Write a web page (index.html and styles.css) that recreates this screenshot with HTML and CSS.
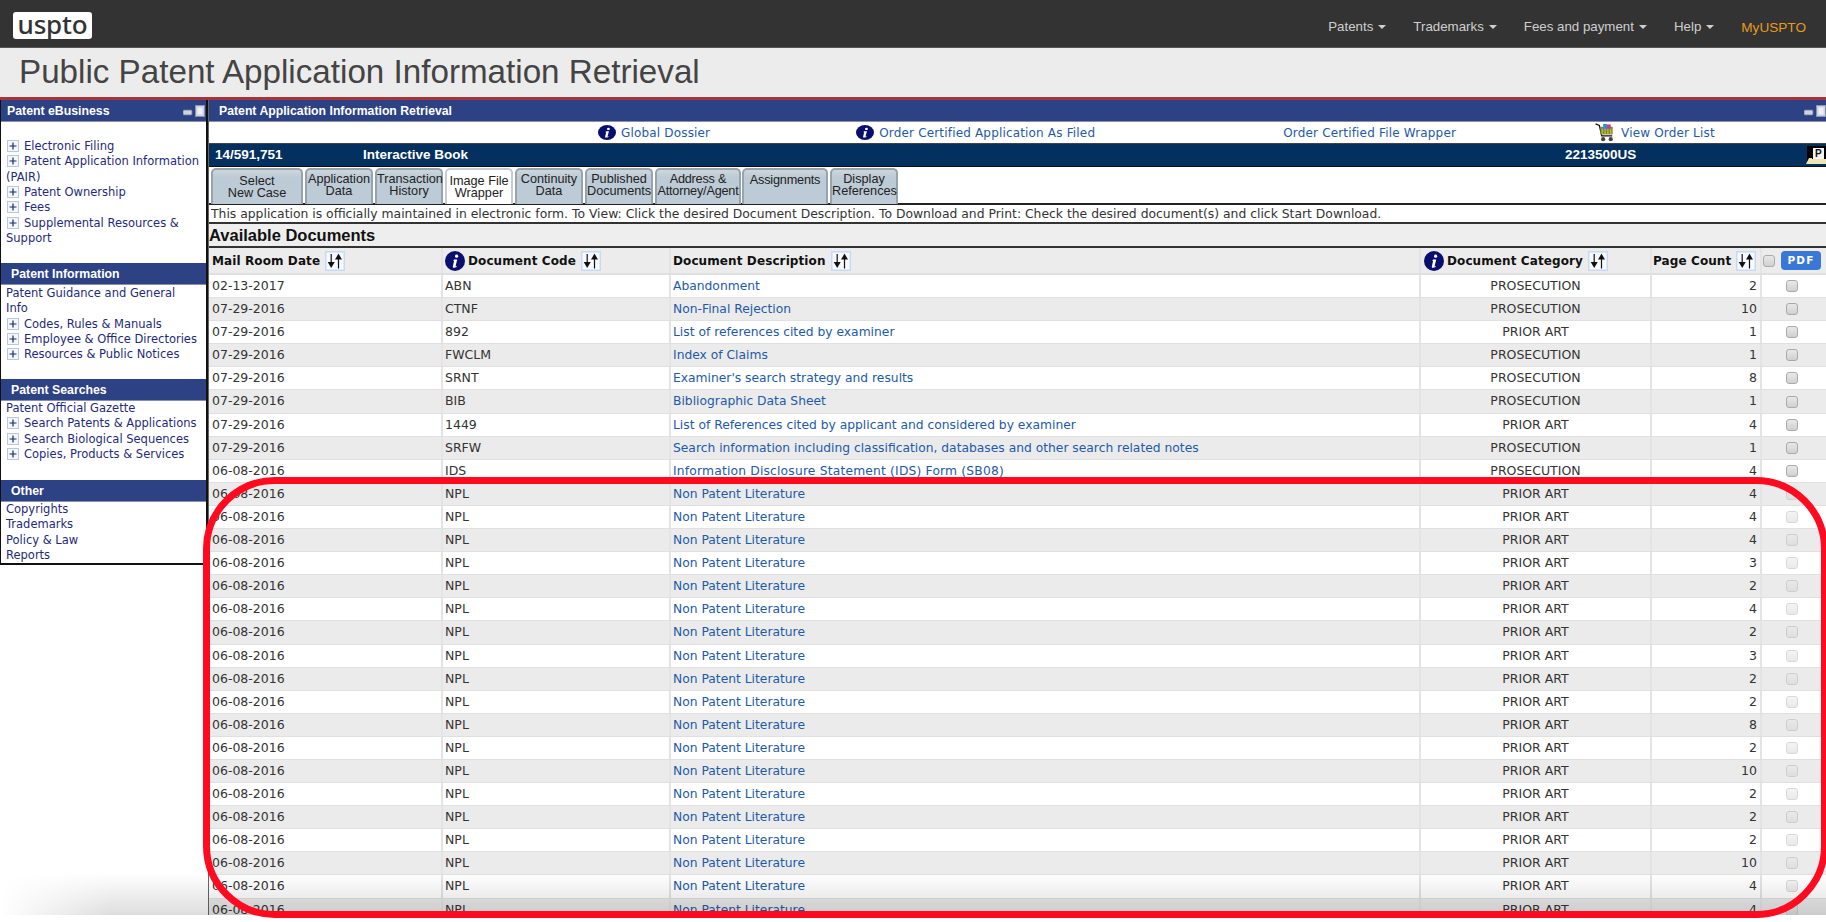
FILE: index.html
```html
<!DOCTYPE html>
<html lang="en">
<head>
<meta charset="utf-8">
<title>Public Patent Application Information Retrieval</title>
<link rel="stylesheet" href="styles.css">
</head>
<body>
<svg class="defs" width="0" height="0" aria-hidden="true">
  <symbol id="info" viewBox="0 0 20 20" preserveAspectRatio="none"><circle cx="10" cy="10" r="10" fill="#0a0f6e"/><circle cx="11.6" cy="5.2" r="1.6" fill="#fff"/><path d="M9 8.4h3.2l-1.7 7 1.3-.5-.2 1.1c-1 .5-1.8.8-2.6.8-1 0-1.3-.6-1.1-1.6l1.2-5.5-1 .1z" fill="#fff"/></symbol>
  <symbol id="sort" viewBox="0 0 20 20"><rect x=".75" y=".75" width="18.5" height="18.5" fill="#f7faff" stroke="#c6daf6" stroke-width="1.5"/><path d="M6.2 3v9.5" stroke="#111" stroke-width="1.2"/><path d="M2.7 11h7l-3.5 6z" fill="#111"/><path d="M13.5 8v9.5" stroke="#111" stroke-width="1.2"/><path d="M10 8.6h7L13.5 2.6z" fill="#111"/></symbol>
  <symbol id="plus" viewBox="0 0 12 12"><rect x=".5" y=".5" width="11" height="11" fill="#f4f7fb" stroke="#b9c8dc"/><path d="M6 2.5v7M2.5 6h7" stroke="#1a2a6c" stroke-width="1.2"/></symbol>
  <symbol id="winbtns" viewBox="0 0 22 12"><rect x="0" y="5" width="9" height="5" rx="1" fill="#cfd3de" stroke="#6c7696" stroke-width=".8"/><rect x="12.5" y=".5" width="9" height="11" fill="#cfd3de" stroke="#8a93ad"/><rect x="14.5" y="2.5" width="5" height="7" fill="#eef0f5"/></symbol>
</svg>
<div class="page">
  <header class="navbar">
    <div class="logo">uspto</div>
    <nav class="menu">
      <a class="menu-item">Patents <i class="caret"></i></a>
      <a class="menu-item">Trademarks <i class="caret"></i></a>
      <a class="menu-item">Fees and payment <i class="caret"></i></a>
      <a class="menu-item">Help <i class="caret"></i></a>
      <a class="menu-item my">MyUSPTO</a>
    </nav>
  </header>
  <div class="titlebar"><h1>Public Patent Application Information Retrieval</h1></div>
  <div class="content">
    <aside class="sidebar">
      <h2 class="side-head first">Patent eBusiness<svg class="winbtns"><use href="#winbtns"/></svg></h2>
      <ul class="side-list s1">
        <li><svg class="plus"><use href="#plus"/></svg>Electronic Filing</li>
        <li><svg class="plus"><use href="#plus"/></svg>Patent Application Information (PAIR)</li>
        <li><svg class="plus"><use href="#plus"/></svg>Patent Ownership</li>
        <li><svg class="plus"><use href="#plus"/></svg>Fees</li>
        <li><svg class="plus"><use href="#plus"/></svg>Supplemental Resources &amp; Support</li>
      </ul>
      <h2 class="side-head">Patent Information</h2>
      <ul class="side-list s2">
        <li>Patent Guidance and General Info</li>
        <li><svg class="plus"><use href="#plus"/></svg>Codes, Rules &amp; Manuals</li>
        <li><svg class="plus"><use href="#plus"/></svg>Employee &amp; Office Directories</li>
        <li><svg class="plus"><use href="#plus"/></svg>Resources &amp; Public Notices</li>
      </ul>
      <h2 class="side-head">Patent Searches</h2>
      <ul class="side-list s3">
        <li>Patent Official Gazette</li>
        <li><svg class="plus"><use href="#plus"/></svg>Search Patents &amp; Applications</li>
        <li><svg class="plus"><use href="#plus"/></svg>Search Biological Sequences</li>
        <li><svg class="plus"><use href="#plus"/></svg>Copies, Products &amp; Services</li>
      </ul>
      <h2 class="side-head">Other</h2>
      <ul class="side-list s4">
        <li>Copyrights</li>
        <li>Trademarks</li>
        <li>Policy &amp; Law</li>
        <li>Reports</li>
      </ul>
    </aside>
    <main class="main">
      <h2 class="main-head">Patent Application Information Retrieval<svg class="winbtns"><use href="#winbtns"/></svg></h2>
      <div class="links">
        <a class="link l1"><svg class="i-small"><use href="#info"/></svg>Global Dossier</a>
        <a class="link l2"><svg class="i-small"><use href="#info"/></svg>Order Certified Application As Filed</a>
        <a class="link l3">Order Certified File Wrapper</a>
        <a class="link l4"><svg class="cart" viewBox="0 0 22 20"><path d="M0 1l4 1.5 2.5 11h11" fill="none" stroke="#111" stroke-width="1.4"/><rect x="5" y="4" width="13" height="8" fill="#7a8a30"/><rect x="8" y="1" width="4" height="6" fill="#2a8fd8"/><rect x="12" y="1.5" width="4" height="5" fill="#c94070"/><path d="M7 6v6M10 6v6M13 6v6M16 6v6" stroke="#d8c840"/><circle cx="8" cy="17" r="2.2" fill="#444"/><circle cx="16" cy="17" r="2.2" fill="#444"/></svg>View Order List</a>
      </div>
      <div class="band">
        <span class="b1">14/591,751</span>
        <span class="b2">Interactive Book</span>
        <span class="b3">2213500US</span>
        <svg class="pfile" viewBox="0 0 20 20"><rect x="1" y="1" width="19" height="15" fill="#000"/><rect x="7" y="3" width="11" height="11" fill="#f4f4f0"/><text x="9" y="12" font-size="10" font-family="Liberation Sans" fill="#111">P</text><path d="M0 19l3-6h3v1h14v5z" fill="#efe6b4"/></svg>
      </div>
      <div class="tabs">
        <a class="tab t1 low">Select<br>New Case</a>
        <a class="tab t2">Application<br>Data</a>
        <a class="tab t2">Transaction<br>History</a>
        <a class="tab t2 active low">Image File<br>Wrapper</a>
        <a class="tab t2">Continuity<br>Data</a>
        <a class="tab t2">Published<br>Documents</a>
        <a class="tab t3">Address &amp;<br>Attorney/Agent</a>
        <a class="tab t3 one">Assignments</a>
        <a class="tab t2">Display<br>References</a>
      </div>
      <p class="notice">This application is officially maintained in electronic form. To View: Click the desired Document Description. To Download and Print: Check the desired document(s) and click Start Download.</p>
      <h3 class="avail">Available Documents</h3>
      <div class="table">
        <div class="row head">
          <div class="c">Mail Room Date<svg class="sort"><use href="#sort"/></svg></div>
          <div class="c"><svg class="i-big"><use href="#info"/></svg>Document Code<svg class="sort"><use href="#sort"/></svg></div>
          <div class="c">Document Description<svg class="sort"><use href="#sort"/></svg></div>
          <div class="c"><svg class="i-big"><use href="#info"/></svg>Document Category<svg class="sort"><use href="#sort"/></svg></div>
          <div class="c">Page Count<svg class="sort"><use href="#sort"/></svg></div>
          <div class="c pdfcell"><input class="chk headchk" type="checkbox" aria-label="All"><span class="pdf">PDF</span></div>
        </div>
        <div class="row"><div class="c">02-13-2017</div><div class="c">ABN</div><div class="c"><a>Abandonment</a></div><div class="c cat">PROSECUTION</div><div class="c num">2</div><div class="c box"><input class="chk" type="checkbox"></div></div>
        <div class="row"><div class="c">07-29-2016</div><div class="c">CTNF</div><div class="c"><a>Non-Final Rejection</a></div><div class="c cat">PROSECUTION</div><div class="c num">10</div><div class="c box"><input class="chk" type="checkbox"></div></div>
        <div class="row"><div class="c">07-29-2016</div><div class="c">892</div><div class="c"><a>List of references cited by examiner</a></div><div class="c cat">PRIOR ART</div><div class="c num">1</div><div class="c box"><input class="chk" type="checkbox"></div></div>
        <div class="row"><div class="c">07-29-2016</div><div class="c">FWCLM</div><div class="c"><a>Index of Claims</a></div><div class="c cat">PROSECUTION</div><div class="c num">1</div><div class="c box"><input class="chk" type="checkbox"></div></div>
        <div class="row"><div class="c">07-29-2016</div><div class="c">SRNT</div><div class="c"><a>Examiner's search strategy and results</a></div><div class="c cat">PROSECUTION</div><div class="c num">8</div><div class="c box"><input class="chk" type="checkbox"></div></div>
        <div class="row"><div class="c">07-29-2016</div><div class="c">BIB</div><div class="c"><a>Bibliographic Data Sheet</a></div><div class="c cat">PROSECUTION</div><div class="c num">1</div><div class="c box"><input class="chk" type="checkbox"></div></div>
        <div class="row"><div class="c">07-29-2016</div><div class="c">1449</div><div class="c"><a>List of References cited by applicant and considered by examiner</a></div><div class="c cat">PRIOR ART</div><div class="c num">4</div><div class="c box"><input class="chk" type="checkbox"></div></div>
        <div class="row"><div class="c">07-29-2016</div><div class="c">SRFW</div><div class="c"><a>Search information including classification, databases and other search related notes</a></div><div class="c cat">PROSECUTION</div><div class="c num">1</div><div class="c box"><input class="chk" type="checkbox"></div></div>
        <div class="row"><div class="c">06-08-2016</div><div class="c">IDS</div><div class="c"><a class="ids">Information Disclosure Statement (IDS) Form (SB08)</a></div><div class="c cat">PROSECUTION</div><div class="c num">4</div><div class="c box"><input class="chk" type="checkbox"></div></div>
        <div class="row"><div class="c">06-08-2016</div><div class="c">NPL</div><div class="c"><a>Non Patent Literature</a></div><div class="c cat">PRIOR ART</div><div class="c num">4</div><div class="c box"><input class="chk off" type="checkbox" disabled></div></div>
        <div class="row"><div class="c">06-08-2016</div><div class="c">NPL</div><div class="c"><a>Non Patent Literature</a></div><div class="c cat">PRIOR ART</div><div class="c num">4</div><div class="c box"><input class="chk off" type="checkbox" disabled></div></div>
        <div class="row"><div class="c">06-08-2016</div><div class="c">NPL</div><div class="c"><a>Non Patent Literature</a></div><div class="c cat">PRIOR ART</div><div class="c num">4</div><div class="c box"><input class="chk off" type="checkbox" disabled></div></div>
        <div class="row"><div class="c">06-08-2016</div><div class="c">NPL</div><div class="c"><a>Non Patent Literature</a></div><div class="c cat">PRIOR ART</div><div class="c num">3</div><div class="c box"><input class="chk off" type="checkbox" disabled></div></div>
        <div class="row"><div class="c">06-08-2016</div><div class="c">NPL</div><div class="c"><a>Non Patent Literature</a></div><div class="c cat">PRIOR ART</div><div class="c num">2</div><div class="c box"><input class="chk off" type="checkbox" disabled></div></div>
        <div class="row"><div class="c">06-08-2016</div><div class="c">NPL</div><div class="c"><a>Non Patent Literature</a></div><div class="c cat">PRIOR ART</div><div class="c num">4</div><div class="c box"><input class="chk off" type="checkbox" disabled></div></div>
        <div class="row"><div class="c">06-08-2016</div><div class="c">NPL</div><div class="c"><a>Non Patent Literature</a></div><div class="c cat">PRIOR ART</div><div class="c num">2</div><div class="c box"><input class="chk off" type="checkbox" disabled></div></div>
        <div class="row"><div class="c">06-08-2016</div><div class="c">NPL</div><div class="c"><a>Non Patent Literature</a></div><div class="c cat">PRIOR ART</div><div class="c num">3</div><div class="c box"><input class="chk off" type="checkbox" disabled></div></div>
        <div class="row"><div class="c">06-08-2016</div><div class="c">NPL</div><div class="c"><a>Non Patent Literature</a></div><div class="c cat">PRIOR ART</div><div class="c num">2</div><div class="c box"><input class="chk off" type="checkbox" disabled></div></div>
        <div class="row"><div class="c">06-08-2016</div><div class="c">NPL</div><div class="c"><a>Non Patent Literature</a></div><div class="c cat">PRIOR ART</div><div class="c num">2</div><div class="c box"><input class="chk off" type="checkbox" disabled></div></div>
        <div class="row"><div class="c">06-08-2016</div><div class="c">NPL</div><div class="c"><a>Non Patent Literature</a></div><div class="c cat">PRIOR ART</div><div class="c num">8</div><div class="c box"><input class="chk off" type="checkbox" disabled></div></div>
        <div class="row"><div class="c">06-08-2016</div><div class="c">NPL</div><div class="c"><a>Non Patent Literature</a></div><div class="c cat">PRIOR ART</div><div class="c num">2</div><div class="c box"><input class="chk off" type="checkbox" disabled></div></div>
        <div class="row"><div class="c">06-08-2016</div><div class="c">NPL</div><div class="c"><a>Non Patent Literature</a></div><div class="c cat">PRIOR ART</div><div class="c num">10</div><div class="c box"><input class="chk off" type="checkbox" disabled></div></div>
        <div class="row"><div class="c">06-08-2016</div><div class="c">NPL</div><div class="c"><a>Non Patent Literature</a></div><div class="c cat">PRIOR ART</div><div class="c num">2</div><div class="c box"><input class="chk off" type="checkbox" disabled></div></div>
        <div class="row"><div class="c">06-08-2016</div><div class="c">NPL</div><div class="c"><a>Non Patent Literature</a></div><div class="c cat">PRIOR ART</div><div class="c num">2</div><div class="c box"><input class="chk off" type="checkbox" disabled></div></div>
        <div class="row"><div class="c">06-08-2016</div><div class="c">NPL</div><div class="c"><a>Non Patent Literature</a></div><div class="c cat">PRIOR ART</div><div class="c num">2</div><div class="c box"><input class="chk off" type="checkbox" disabled></div></div>
        <div class="row"><div class="c">06-08-2016</div><div class="c">NPL</div><div class="c"><a>Non Patent Literature</a></div><div class="c cat">PRIOR ART</div><div class="c num">10</div><div class="c box"><input class="chk off" type="checkbox" disabled></div></div>
        <div class="row"><div class="c">06-08-2016</div><div class="c">NPL</div><div class="c"><a>Non Patent Literature</a></div><div class="c cat">PRIOR ART</div><div class="c num">4</div><div class="c box"><input class="chk off" type="checkbox" disabled></div></div>
        <div class="row"><div class="c">06-08-2016</div><div class="c">NPL</div><div class="c"><a>Non Patent Literature</a></div><div class="c cat">PRIOR ART</div><div class="c num">4</div><div class="c box"><input class="chk off" type="checkbox" disabled></div></div>
      </div>
    </main>
  </div>
  <div class="fade"></div>
</div>
<div class="annotation"></div>
</body>
</html>
```

FILE: styles.css
```css
* { box-sizing: border-box; }
html, body { margin: 0; padding: 0; height: 922px; overflow: hidden; background: #fff; }
body { position: relative; font-family: "DejaVu Sans", sans-serif; color: #333; }
.defs { position: absolute; }
.page { position: relative; height: 915px; overflow: hidden; display: flex; flex-direction: column; }

.navbar { height: 48px; flex: none; background: #333; border-bottom: 1px solid #555; display: flex; align-items: center; justify-content: space-between; padding: 6px 20px 0 13px; }
.logo { width: 79px; height: 27px; margin-bottom: 2px; background: #fff; border-radius: 3px; color: #333; font: 500 26px/25px "Noto Sans", sans-serif; text-align: center; letter-spacing: -.2px; }
.menu { display: flex; align-items: center; gap: 27px; }
.menu-item { font: 13.3px "Liberation Sans", sans-serif; color: #cfcfcf; display: flex; align-items: center; gap: 5px; }
.caret { width: 0; height: 0; border-left: 4px solid transparent; border-right: 4px solid transparent; border-top: 4px solid #cfcfcf; }
.my { color: #e59a1c; margin-top: 2px; font-size: 13.6px; }

.titlebar { height: 52px; flex: none; background: #ececec; border-bottom: 3px solid #a8343a; padding-left: 19px; }
h1 { margin: 0; font: 400 33.2px/47px "Liberation Sans", sans-serif; color: #444; }

.content { flex: 1; min-height: 0; display: flex; }
.sidebar { width: 208px; flex: none; align-self: flex-start; background: #fff; border: 2px solid #111; border-top: 0; border-left-width: 1px; }
.side-head { height: 22px; margin: 0; background: #2d4185; color: #fff; font: 700 12.3px/23px "Liberation Sans", sans-serif; padding-left: 10px; border-bottom: 1px solid #8b8fa0; position: relative; }
.side-head.first { padding-left: 6px; }
.winbtns { position: absolute; right: 1px; top: 5px; width: 22px; height: 12px; }
.side-list { list-style: none; margin: 0; padding: 0 2px 0 5px; font-size: 11.5px; line-height: 15.35px; color: #1f2a7c; }
.s1 { padding-top: 17px; height: 141px; }
.s2 { height: 94px; padding-top: 1px; padding-right: 8px; }
.s3 { height: 79px; padding-top: 0; }
.s4 { height: 61px; padding-top: 0; }
.plus { width: 12px; height: 12px; margin: 0 5px 0 1px; vertical-align: -2px; }

.main { flex: 1; min-width: 0; display: flex; flex-direction: column; border-left: 1px solid #666; }
.main-head { height: 22px; flex: none; margin: 0; background: #2d4185; color: #fff; font: 700 12.25px/23px "Liberation Sans", sans-serif; padding-left: 10px; border-bottom: 1px solid #8b8fa0; position: relative; }
.main-head .winbtns { right: 0; }
.links { height: 22px; flex: none; background: #fff; border-bottom: 1px solid #444; display: flex; align-items: center; font-size: 12px; color: #1e5aa8; }
.link { display: flex; align-items: center; white-space: nowrap; letter-spacing: .17px; }
.l1 { margin-left: 389px; }
.l2 { margin-left: 146px; }
.l3 { margin-left: 188px; }
.l4 { margin-left: 139px; }
.i-small { width: 18px; height: 15px; margin-right: 5px; }
.cart { width: 22px; height: 19px; margin-right: 4px; }
.band { height: 23px; flex: none; background: #03305f; border-bottom: 1px solid #111; color: #fff; font: 700 13.5px/22px "Liberation Sans", sans-serif; display: flex; padding-left: 6px; position: relative; }
.b1 { width: 148px; }
.b2 { width: 1202px; }
.pfile { position: absolute; right: 0; top: 1px; width: 20px; height: 20px; }
.tabs { height: 38px; flex: none; background: #fff; display: flex; padding: 1px 0 0 2px; gap: 2px; border-bottom: 2px solid #222; }
.tab { flex: none; width: 68px; height: 36px; border: 2px solid #97a3ad; border-bottom: 0; border-radius: 5px 5px 0 0; background: linear-gradient(#cfd6dc, #bccbd6 22%, #bccbd6); font: 12.7px/11.5px "Liberation Sans", sans-serif; color: #222; text-align: center; padding-top: 4px; white-space: nowrap; }
.t1 { width: 92px; }
.t3 { width: 86px; }
.t3.one { margin-left: -1px; padding-top: 5px; }
.low { padding-top: 6px; }
.active { background: #fff; border-color: #c4ccd4; }
.tabs .t3 { letter-spacing: -.2px; }
.notice { height: 19px; flex: none; margin: 0; background: #fff; border-bottom: 2px solid #333; font-size: 12.37px; line-height: 18px; color: #333; padding-left: 2px; white-space: nowrap; }
.avail { height: 24px; flex: none; margin: 0; background: #eee; border-bottom: 2px solid #333; color: #111; font: 700 16.5px/22px "Liberation Sans", sans-serif; }
.table { flex: none; }
.row { display: grid; grid-template-columns: 232px 228px 750px 231px 110px 66px; height: 23.1px; background: #fff; border-bottom: 1px solid #e0e0e0; font-size: 12.5px; line-height: 22px; color: #333; }
.row:nth-child(odd) { background: #ebebeb; }
.c { padding: 0 3px; white-space: nowrap; overflow: hidden; border-left: 2px solid #e4e4e4; }
.c:first-child { border-left: 0; }
.c:nth-child(2), .c:nth-child(3) { padding-left: 2px; }
.c a { color: #1e5aa8; font-size: 12.3px; }
.c a.ids { letter-spacing: .18px; }
.cat { text-align: center; }
.num { text-align: right; }
.box { display: flex; align-items: center; justify-content: center; padding: 0 4px 0 0; }
.head { height: 27px; background: #ececec !important; border-bottom: 2px solid #e0e0e0; font-weight: 700; font-size: 12px; color: #111; letter-spacing: .1px; }
.head .c { display: flex; align-items: center; }
.head .c:nth-child(5) { padding-left: 1px; }
.sort { width: 20px; height: 20px; margin-left: 5px; flex: none; }
.i-big { width: 20px; height: 20px; margin-right: 3px; flex: none; }
.chk { appearance: none; -webkit-appearance: none; width: 12px; height: 12px; margin: 0; border: 1px solid #aaa; border-radius: 3px; background: linear-gradient(#e8e8e8, #d0d0d0); }
.chk.off { opacity: .45; }
.headchk { flex: none; }
.head .pdfcell { padding: 0 0 0 1px; gap: 6px; }
.pdf { width: 40px; height: 19px; flex: none; background: #3a78d8; border-radius: 4px; color: #fff; font: 700 10.5px/19px "DejaVu Sans", sans-serif; letter-spacing: 1.1px; text-align: center; }

.fade { position: absolute; left: 0; right: 0; bottom: 0; height: 42px; background: linear-gradient(rgba(0,0,0,0), rgba(0,0,0,.13)); pointer-events: none; -webkit-mask-image: linear-gradient(90deg, transparent 0, #000 110px); mask-image: linear-gradient(90deg, transparent 0, #000 110px); }
.annotation { position: absolute; left: 203px; top: 477px; width: 1625px; height: 441px; border: 7.5px solid #ff0a1e; border-radius: 72px; pointer-events: none; }
```
